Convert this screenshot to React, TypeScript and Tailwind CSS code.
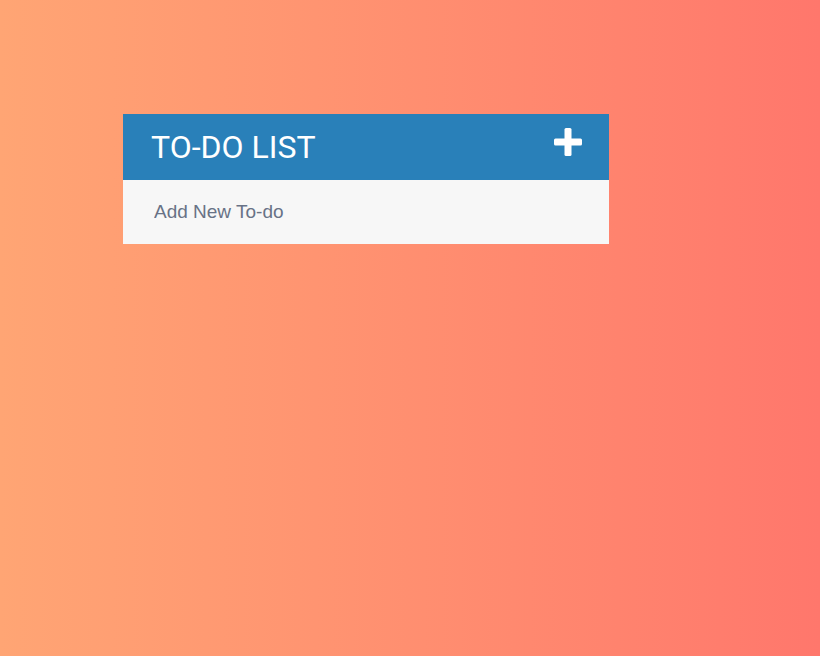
import React from "react";

function PlusIcon() {
  return (
    <svg width="28" height="28" viewBox="0 0 28 28" aria-hidden="true" className="mb-[10px]">
      <rect x="10.5" y="0" width="7" height="28" rx="1.5" fill="#fff" />
      <rect x="0" y="10.5" width="28" height="7" rx="1.5" fill="#fff" />
    </svg>
  );
}

function App() {
  return (
    <div className="min-h-[656px] w-full bg-gradient-to-r from-[#ffa574] to-[#ff776c] pt-[114px] pl-[123px]">
      <div className="w-[486px]">
        <div className="flex h-[66px] items-center justify-between bg-[#2980b9] pl-[28px] pr-[27px]">
          <h1 className="font-['Roboto',sans-serif] text-[32px] font-normal text-white">TO-DO LIST</h1>
          <PlusIcon />
        </div>
        <div className="flex h-[64px] items-center bg-[#f7f7f7] pl-[31px] pr-[32px]">
          <input
            type="text"
            placeholder="Add New To-do"
            className="w-full bg-transparent font-['Liberation_Sans',Arial,sans-serif] text-[19px] text-[#687286] placeholder:text-[#687286] outline-none"
          />
        </div>
      </div>
    </div>
  );
}

export default App;
